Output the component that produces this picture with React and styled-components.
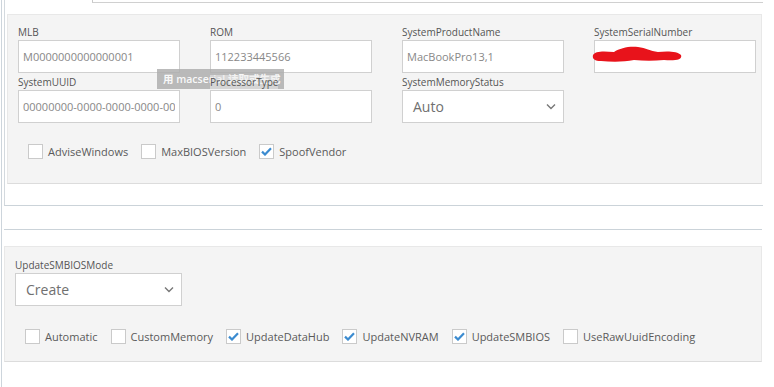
import styled, { createGlobalStyle } from 'styled-components';

const GlobalStyle = createGlobalStyle`
  html, body {
    margin: 0;
    padding: 0;
    background: #ffffff;
  }
  body {
    font-family: "Open Sans", "Noto Sans CJK SC", sans-serif;
    color: #555;
  }
  * { box-sizing: border-box; }
`;

const Page = styled.div`
  margin-left: 1px;
  height: 387px;
  border-left: 1px solid #cdd5dc;
  overflow: hidden;
`;

const Upper = styled.div`
  margin-left: 2px;
  width: 759px;
  border-left: 1px solid #d3d9de;
  border-bottom: 1px solid #cbd3d9;
`;

const TopStub = styled.div`
  margin-left: 87px;
  height: 3px;
  border-left: 1px solid #c9c9c9;
  border-bottom: 1px solid #d0d0d0;
`;

const Panel = styled.div`
  margin: ${(p) => p.$margin};
  width: ${(p) => p.$width}px;
  height: ${(p) => p.$height}px;
  padding: ${(p) => p.$padding};
  background: #f4f4f4;
  border: 1px solid #e8e8e8;
  border-bottom-color: #dcdcdc;
`;

const Divider = styled.div`
  margin: 23px 0 0 2px;
  width: 758px;
  border-top: 1px solid #cbd3d9;
`;

const Grid = styled.div`
  display: grid;
  grid-template-columns: repeat(4, 162px);
  column-gap: 30px;
  row-gap: 2px;
`;

const Field = styled.div`
  position: relative;
  display: flex;
  flex-direction: column;
  width: ${(p) => p.$width || 162}px;
`;

const Label = styled.span`
  position: relative;
  z-index: ${(p) => (p.$raised ? 3 : 'auto')};
  align-self: flex-start;
  font-size: 10px;
  line-height: 14px;
  color: #555;
  margin-bottom: 1px;
  background: ${(p) => (p.$raised ? 'rgba(236,236,236,0.55)' : 'transparent')};
`;

const InputWrap = styled.div`
  position: relative;
`;

const Input = styled.input`
  display: block;
  width: 100%;
  height: 33px;
  margin: 0;
  padding: 0 4px;
  border: 1px solid #d0d0d0;
  background: #fff;
  font-family: "Open Sans", sans-serif;
  font-size: 11px;
  color: #888;
  outline: none;
`;

const Scribble = styled.svg`
  position: absolute;
  left: -2px;
  top: 5px;
`;

const SelectBox = styled.div`
  display: flex;
  align-items: center;
  justify-content: space-between;
  height: 33px;
  padding: 0 7px 0 10px;
  border: 1px solid #d0d0d0;
  background: #fff;
  font-size: 14px;
  color: #707070;
`;

const Tooltip = styled.div`
  position: absolute;
  z-index: 2;
  left: 139px;
  top: 44px;
  width: 127px;
  height: 20px;
  padding: 0 6px;
  background: rgba(172, 172, 172, 0.82);
  color: rgba(255, 255, 255, 0.92);
  font-size: 10.5px;
  font-weight: 600;
  line-height: 20px;
  white-space: nowrap;
  overflow: hidden;

  &::before {
    content: '';
    position: absolute;
    left: 9px;
    top: -6px;
    border-left: 6px solid transparent;
    border-right: 6px solid transparent;
    border-bottom: 6px solid rgba(172, 172, 172, 0.82);
  }
`;

const CheckRow = styled.div`
  display: flex;
  align-items: center;
  gap: 13px;
  margin-top: ${(p) => p.$top}px;
  padding-left: 10px;
`;

const CheckItem = styled.label`
  display: flex;
  align-items: center;
  gap: 5px;
  font-size: 11px;
  color: #5a5a5a;
  line-height: 15px;
`;

const Box = styled.span`
  display: inline-flex;
  align-items: center;
  justify-content: center;
  width: 15px;
  height: 15px;
  border: 1px solid #cacaca;
  background: #fff;
`;

const Chevron = () => (
  <svg width="10" height="7" viewBox="0 0 10 7">
    <polyline points="1,1.5 5,5.5 9,1.5" fill="none" stroke="#777" strokeWidth="1.4" />
  </svg>
);

const Check = ({ label, checked }) => (
  <CheckItem>
    <Box>
      {checked && (
        <svg width="11" height="9" viewBox="0 0 11 9">
          <path d="M1 4.6 L4 7.5 L10 1.2" fill="none" stroke="#3b8bd0" strokeWidth="2.2" />
        </svg>
      )}
    </Box>
    {label}
  </CheckItem>
);

const TextField = ({ label, value, raised, children }) => (
  <Field>
    <Label $raised={raised}>{label}</Label>
    <InputWrap>
      <Input readOnly value={value} />
      {children}
    </InputWrap>
  </Field>
);

const SelectField = ({ label, value, width }) => (
  <Field $width={width}>
    <Label>{label}</Label>
    <SelectBox>
      <span>{value}</span>
      <Chevron />
    </SelectBox>
  </Field>
);

export default function App() {
  return (
    <Page>
      <GlobalStyle />
      <Upper>
        <TopStub />
        <Panel $margin="11px 1px 21px 2px" $width={755} $height={170} $padding="10px 0 0 10px">
          <Grid>
            <Field>
              <Label>MLB</Label>
              <InputWrap>
                <Input readOnly value="M0000000000000001" />
              </InputWrap>
              <Tooltip>用 macserial 读取或生成</Tooltip>
            </Field>
            <TextField label="ROM" value="112233445566" />
            <TextField label="SystemProductName" value="MacBookPro13,1" />
            <TextField label="SystemSerialNumber" value="">
              <Scribble width="92" height="20" viewBox="0 0 92 20">
                <path
                  d="M1 10 C3 6 11 6 22 7 C28 3 37 1 46 2 C54 3 58 6 66 7 C74 6 86 6 89 10 C91 15 82 16 72 15 C62 16 52 16 42 15 C32 17 20 17 9 16 C3 16 0 14 1 10 Z"
                  fill="#e8131b"
                />
              </Scribble>
            </TextField>
            <TextField label="SystemUUID" value="00000000-0000-0000-0000-000000000000" />
            <TextField label="ProcessorType" value="0" raised />
            <SelectField label="SystemMemoryStatus" value="Auto" />
          </Grid>
          <CheckRow $top={21}>
            <Check label="AdviseWindows" />
            <Check label="MaxBIOSVersion" />
            <Check label="SpoofVendor" checked />
          </CheckRow>
        </Panel>
      </Upper>
      <Divider />
      <Panel $margin="16px 0 0 2px" $width={758} $height={116} $padding="11px 0 0 10px">
        <SelectField label="UpdateSMBIOSMode" value="Create" width={167} />
        <CheckRow $top={23}>
          <Check label="Automatic" />
          <Check label="CustomMemory" />
          <Check label="UpdateDataHub" checked />
          <Check label="UpdateNVRAM" checked />
          <Check label="UpdateSMBIOS" checked />
          <Check label="UseRawUuidEncoding" />
        </CheckRow>
      </Panel>
    </Page>
  );
}
